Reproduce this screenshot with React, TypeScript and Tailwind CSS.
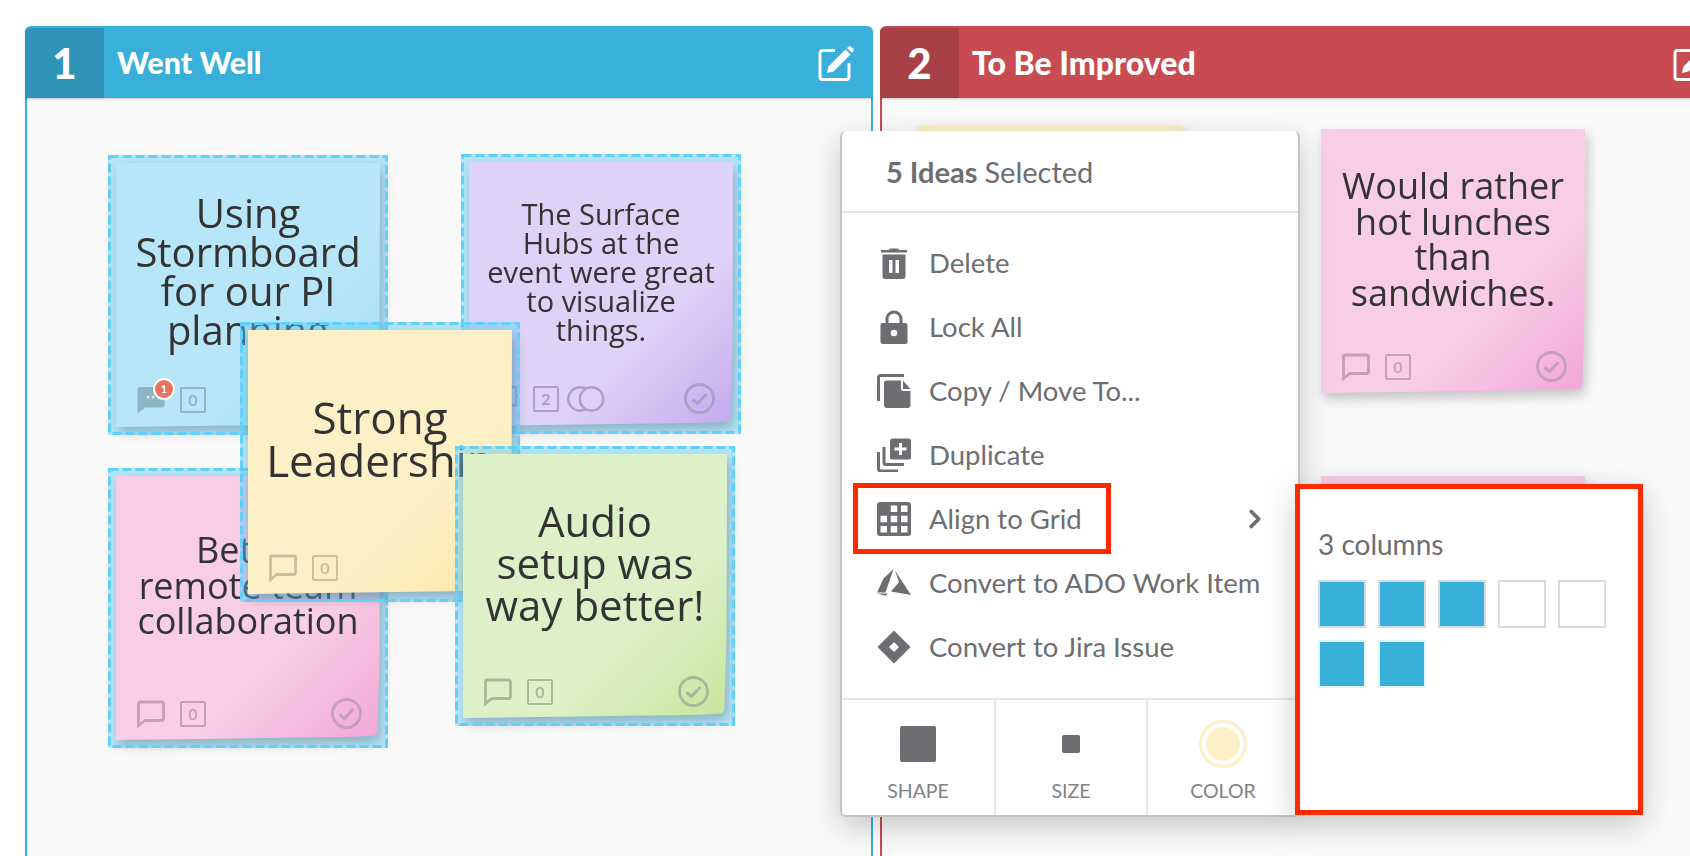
import React from 'react';
import { ChevronRight } from 'lucide-react';

const GRAY = '#6d6e71';

const ChatIcon = ({ filled }: { filled?: boolean }) => (
    <svg width="28" height="28" viewBox="0 0 28 28" className="shrink-0">
        {filled ? (
            <>
                <path d="M2.500 1h23a2 2 0 0 1 2 2v16.500a2 2 0 0 1-2 2H8L0.500 27.500V3a2 2 0 0 1 2-2z" fill="currentColor" />
                <circle cx="11" cy="11" r="1.500" fill="#d6eef8" />
                <circle cx="16" cy="11" r="1.500" fill="#d6eef8" />
            </>
        ) : (
            <path d="M3 2h22a1.500 1.500 0 0 1 1.500 1.500v15.500a1.500 1.500 0 0 1-1.500 1.500H8L1.500 25.500V3.500A1.500 1.500 0 0 1 3 2z" fill="none" stroke="currentColor" strokeWidth="2.800" />
        )}
    </svg>
);

const CountBox = ({ n }: { n: number }) => (
    <div className="w-[26px] h-[26px] border-[2.500px] border-current rounded-[2px] flex items-center justify-center text-[16px] font-bold font-['Lato',sans-serif] leading-none">{n}</div>
);

const CheckCircle = () => (
    <svg width="31" height="31" viewBox="0 0 31 31" className="shrink-0">
        <circle cx="15.500" cy="15.500" r="14" fill="none" stroke="currentColor" strokeWidth="2.800" />
        <path d="M8.500 16.500l5 4 9-9.500" fill="none" stroke="currentColor" strokeWidth="3" />
    </svg>
);

const LinkedCircles = () => (
    <svg width="38" height="28" viewBox="0 0 38 28" className="shrink-0">
        <circle cx="13" cy="14" r="11.700" fill="none" stroke="currentColor" strokeWidth="2.400" />
        <circle cx="24.500" cy="14" r="11.700" fill="#dfd2f7" stroke="currentColor" strokeWidth="2.400" />
    </svg>
);

const SelectionOutline = () => (
    <svg width="280" height="280" viewBox="0 0 280 280" className="absolute inset-0 pointer-events-none">
        <rect x="1.500" y="1.500" width="277" height="277" fill="none" stroke="#5fd1fb" strokeWidth="3" strokeDasharray="9 4" />
    </svg>
);

const EditIcon = () => (
    <svg width="36" height="36" viewBox="0 0 36 36">
        <path d="M17 4.500H4.500A2.500 2.500 0 0 0 2 7v24a2.500 2.500 0 0 0 2.500 2.500h24A2.500 2.500 0 0 0 31 31V17" fill="none" stroke="white" strokeWidth="3" />
        <path d="M10.500 20.500L27.500 3.500l5 5L15.500 25.500l-6.500 1.500z" fill="white" />
        <path d="M29 2l1.500-1.300a2 2 0 0 1 2.700 0l2 2a2 2 0 0 1 0 2.700L34 6.800z" fill="white" />
    </svg>
);

interface NoteProps {
    pos: string;
    tone: string;
    textClass: string;
    iconClass: string;
    lines: string[];
    selected?: boolean;
    footer?: React.ReactNode;
}

const Footer = ({ n = 0, filled, linked, check = true }: { n?: number; filled?: boolean; linked?: boolean; check?: boolean }) => (
    <div className="flex items-center">
        <div className="relative mr-[15px]">
            <ChatIcon filled={filled} />
            {filled && (
                <div className="absolute -top-[8px] left-[16px] w-[22px] h-[22px] rounded-full bg-[#ec7360] border-2 border-white text-white text-[11px] font-bold font-['Lato',sans-serif] flex items-center justify-center">1</div>
            )}
        </div>
        <CountBox n={n} />
        {linked && <div className="ml-[8px]"><LinkedCircles /></div>}
        {check && <div className="ml-auto mr-[-3px]"><CheckCircle /></div>}
    </div>
);

const Note = ({ pos, tone, textClass, iconClass, lines, selected = true, footer }: NoteProps) => {
    const body = (
        <div className="w-[264px] h-[264px] drop-shadow-[3px_6px_6px_rgba(0,0,0,0.22)]">
            <div className={`w-full h-full flex flex-col justify-between px-[21px] pb-[11px] [clip-path:polygon(0_0,100%_0,99.800%_70%,99%_97%,98%_98.300%,90%_98.800%,0_100%)] ${tone}`}>
                <div className={`font-['Open_Sans',sans-serif] text-[#333333] text-center -mx-[21px] ${textClass}`}>
                    {lines.map(l => <div key={l}>{l}</div>)}
                </div>
                <div className={iconClass}>{footer ?? <Footer />}</div>
            </div>
        </div>
    );
    if (!selected) return <div className={`absolute ${pos}`}>{body}</div>;
    return (
        <div className={`absolute w-[280px] h-[280px] p-[8px] bg-[#5fcdfa]/45 ${pos}`}>
            {body}
            <SelectionOutline />
        </div>
    );
};

const pink = 'bg-[linear-gradient(135deg,#f8cde6_0%,#f8cde6_66%,#f2a6d6_100%)]';
const blue = 'bg-[linear-gradient(135deg,#b6e6f8_0%,#b6e6f8_66%,#a6dcf4_100%)]';
const purple = 'bg-[linear-gradient(135deg,#dfd2f7_0%,#dfd2f7_66%,#c4a9ee_100%)]';
const yellow = 'bg-[linear-gradient(135deg,#fdf0c6_0%,#fdf0c6_66%,#fde6a6_100%)]';
const green = 'bg-[linear-gradient(135deg,#ddf0c7_0%,#ddf0c7_66%,#c6e69c_100%)]';

const Column = ({ num, title, titleClass, dark, main, line, children }: { num: string; title: string; titleClass: string; dark: string; main: string; line: string; children?: React.ReactNode }) => (
    <div className="relative w-[848px] shrink-0 flex flex-col">
        <div className={`h-[72px] flex items-center rounded-t-[6px] overflow-hidden border-t-2 shadow-[0_1px_2px_rgba(0,0,0,0.2)] z-10 ${main} ${line}`}>
            <div className={`w-[79px] h-full flex items-center justify-center text-white font-['Lato',sans-serif] font-black text-[42px] ${dark}`}>{num}</div>
            <div className={`ml-[13px] pb-[1px] text-white font-['Lato',sans-serif] font-black leading-none flex-1 ${titleClass}`}>{title}</div>
            <div className="mr-[19px] mt-[2px]"><EditIcon /></div>
        </div>
        <div className={`flex-1 bg-[#f9f9f9] border-x-2 ${line}`} />
        {children}
    </div>
);

const MenuItem = ({ label, icon, chevron }: { label: string; icon: React.ReactNode; chevron?: boolean }) => (
    <div className="h-[64px] flex items-center pl-[35px] pr-[28px]">
        <div className="w-[34px] h-[34px] flex items-center justify-center shrink-0">{icon}</div>
        <span className="ml-[18px] flex-1 text-[27.500px] text-[#6d6e71] font-['Lato',sans-serif] whitespace-nowrap">{label}</span>
        {chevron && <ChevronRight size={30} color={GRAY} strokeWidth={3} />}
    </div>
);

const TrashIcon = () => (
    <svg width="34" height="34" viewBox="0 0 34 34" fill={GRAY}>
        <path d="M4 4h8l1-1.500h8L22 4h8v2.500H4z" />
        <path d="M5.500 8.500h23V30a3 3 0 0 1-3 3h-17a3 3 0 0 1-3-3z" />
        <rect x="12" y="14" width="3.500" height="13" fill="white" />
        <rect x="18.500" y="14" width="3.500" height="13" fill="white" />
    </svg>
);

const LockIcon = () => (
    <svg width="34" height="34" viewBox="0 0 34 34" fill={GRAY}>
        <path d="M10 14V9a7 7 0 0 1 14 0v5" fill="none" stroke={GRAY} strokeWidth="3" />
        <rect x="3.500" y="13" width="27" height="21" rx="2" />
        <circle cx="17" cy="23" r="3.300" fill="white" />
    </svg>
);

const CopyIcon = () => (
    <svg width="34" height="34" viewBox="0 0 34 34" fill={GRAY}>
        <path d="M1.500 27V3.500A2 2 0 0 1 3.500 1.500H27" fill="none" stroke={GRAY} strokeWidth="3" />
        <path d="M7 9a2.500 2.500 0 0 1 2.500-2.500h14.500v8a2.500 2.500 0 0 0 2.500 2.500h7v14a3 3 0 0 1-3 3H10a3 3 0 0 1-3-3z" />
        <path d="M26 6.500l7.500 8.500H26z" />
    </svg>
);

const DuplicateIcon = () => (
    <svg width="34" height="34" viewBox="0 0 34 34" fill={GRAY}>
        <rect x="13" y="0.500" width="21" height="21" rx="2.500" />
        <path d="M23.500 5v12M17.500 11h12" stroke="white" strokeWidth="3" />
        <path d="M7 9v15.500a2 2 0 0 0 2 2H27" fill="none" stroke={GRAY} strokeWidth="3" />
        <path d="M1.500 14v17a2 2 0 0 0 2 2H21" fill="none" stroke={GRAY} strokeWidth="3" />
    </svg>
);

const GridIcon = () => (
    <svg width="34" height="34" viewBox="0 0 34 34">
        <rect width="34" height="34" rx="3" fill={GRAY} />
        {[3.500, 13.750, 24].flatMap(y => [3.500, 13.750, 24].map(x => (
            x === 3.500 && y === 3.500 ? null : <rect key={`${x}-${y}`} x={x} y={y} width="6.500" height="6.500" fill="white" />
        )))}
    </svg>
);

const AzureIcon = () => (
    <svg width="34" height="28" viewBox="0 0 34 28" fill={GRAY}>
        <path d="M16.500 0L6.500 9.500 0 23.500h8.500z" />
        <path d="M18 1.500L22 13l-8 9.500 20 3.500z" />
        <path d="M0 24.500h10.500l-2 2.200z" />
    </svg>
);

const JiraIcon = () => (
    <svg width="34" height="34" viewBox="0 0 34 34" fill={GRAY} fillRule="evenodd">
        <path d="M17 0.500L33.500 17 17 33.500 0.500 17zM17 12l-5 5 5 5 5-5z" />
    </svg>
);

const Square = ({ on, soft }: { on?: boolean; soft?: boolean }) => (
    <div className={`w-[48px] h-[48px] border-2 ${soft ? 'border-[#e1f5fd]' : 'border-[#d5dbe1]'} ${on ? 'bg-[#37afd9]' : 'bg-white'}`} />
);

const BottomCell = ({ label, children, className = '' }: { label: string; children: React.ReactNode; className?: string }) => (
    <div className={`flex flex-col items-center ${className}`}>
        <div className="h-[72px] mt-[8px] flex items-center justify-center">{children}</div>
        <div className="text-[19.500px] leading-[22px] text-[#808285] font-['Lato',sans-serif]">{label}</div>
    </div>
);

export default function App() {
    return (
        <div className="relative w-[1690px] h-[856px] overflow-hidden bg-white pt-[26px] pl-[25px] flex gap-[7px]">
            <Column num="1" title="Went Well" titleClass="text-[30.500px]" dark="bg-[#2f94b8]" main="bg-[#38b0da]" line="border-[#38b0da]">
                <Note pos="left-[83px] top-[129px]" tone={blue} iconClass="text-[#8fb4c4] mb-[2px]" textClass="pt-[30px] text-[40px] leading-[39px]" lines={['Using', 'Stormboard', 'for our PI', 'planning']} footer={<Footer filled check={false} />} />
                <Note pos="left-[436px] top-[128px]" tone={purple} iconClass="text-[#ae9fc4] mb-[1px]" textClass="pt-[37px] text-[29px] leading-[29px]" lines={['The Surface', 'Hubs at the', 'event were great', 'to visualize', 'things.']} footer={<Footer n={2} linked />} />
                <Note pos="left-[83px] top-[442px]" tone={pink} iconClass="text-[#c4a0b8]" textClass="pt-[56px] text-[36px] leading-[35.500px]" lines={['Better', 'remote team', 'collaboration']} />
                <Note pos="left-[215px] top-[296px]" tone={yellow} iconClass="text-[#c9bf9c] mb-[1px]" textClass="pt-[66px] text-[44px] leading-[43px]" lines={['Strong', 'Leadership']} footer={<Footer check={false} />} />
                <Note pos="left-[430px] top-[420px]" tone={green} iconClass="text-[#a6b99a]" textClass="pt-[46px] text-[42px] leading-[42px]" lines={['Audio', 'setup was', 'way better!']} />
            </Column>
            <Column num="2" title="To Be Improved" titleClass="text-[32px]" dark="bg-[#aa4047]" main="bg-[#c94b52]" line="border-[#c94b52]">
                <Note selected={false} pos="left-[37px] top-[100px]" tone={yellow} iconClass="text-[#c9bf9c]" textClass="" lines={[]} />
                <Note selected={false} pos="left-[441px] top-[103px]" tone={pink} iconClass="text-[#c4a0b8]" textClass="pt-[39px] text-[36px] leading-[35.500px]" lines={['Would rather', 'hot lunches', 'than', 'sandwiches.']} />
                <Note selected={false} pos="left-[441px] top-[450px]" tone={pink} iconClass="text-[#c4a0b8]" textClass="" lines={[]} />
            </Column>

            {/* context menu */}
            <div className="absolute left-[840px] top-[131px] w-[460px] h-[686px] bg-white rounded-[6px] border-r-2 border-b-2 border-l-2 border-[#c4c4c4] shadow-[0_10px_30px_rgba(0,0,0,0.2)] flex flex-col">
                <div className="h-[82px] shrink-0 border-b-2 border-[#e6e6e6] flex items-center pl-[44px] pt-[2px] text-[29px] text-[#6d6e71] font-['Lato',sans-serif]">
                    <b className="font-bold mr-[7px]">5 Ideas</b> Selected
                </div>
                <div className="flex-1 pt-[18px]">
                    <MenuItem label="Delete" icon={<TrashIcon />} />
                    <MenuItem label="Lock All" icon={<LockIcon />} />
                    <MenuItem label="Copy / Move To..." icon={<CopyIcon />} />
                    <MenuItem label="Duplicate" icon={<DuplicateIcon />} />
                    <MenuItem label="Align to Grid" icon={<GridIcon />} chevron />
                    <MenuItem label="Convert to ADO Work Item" icon={<AzureIcon />} />
                    <MenuItem label="Convert to Jira Issue" icon={<JiraIcon />} />
                </div>
                <div className="h-[117px] shrink-0 border-t-2 border-[#e6e6e6] flex">
                    <BottomCell label="SHAPE" className="w-[154px] border-r-2 border-[#e6e6e6]">
                        <div className="w-[36px] h-[36px] bg-[#6d6e71] rounded-[2px]" />
                    </BottomCell>
                    <BottomCell label="SIZE" className="w-[152px] border-r-2 border-[#e6e6e6]">
                        <div className="w-[18px] h-[18px] bg-[#6d6e71] rounded-[2px]" />
                    </BottomCell>
                    <BottomCell label="COLOR" className="flex-1">
                        <div className="w-[48px] h-[48px] rounded-full bg-white border-[3px] border-[#fdf0c6] p-[4px]">
                            <div className="w-full h-full rounded-full bg-[#fdf0c6]" />
                        </div>
                    </BottomCell>
                </div>
            </div>

            {/* columns flyout with its red callout */}
            <div className="absolute left-[1295px] top-[484px] w-[348px] h-[331px] bg-white border-[5px] border-[#ff2a00] shadow-[0_10px_30px_rgba(0,0,0,0.2)] pl-[18px] pt-[39px]">
                <div className="text-[28px] leading-[32px] text-[#6d6e71] font-['Lato',sans-serif]">3 columns</div>
                <div className="mt-[20px] grid grid-cols-[repeat(5,48px)] gap-[12px]">
                    <Square on />
                    <Square on />
                    <Square on />
                    <Square />
                    <Square />
                    <Square on soft />
                    <Square on soft />
                </div>
            </div>

            {/* red callout around the menu row */}
            <div className="absolute left-[853px] top-[483px] w-[258px] h-[71px] border-[5px] border-[#ff2a00]" />
        </div>
    );
}
